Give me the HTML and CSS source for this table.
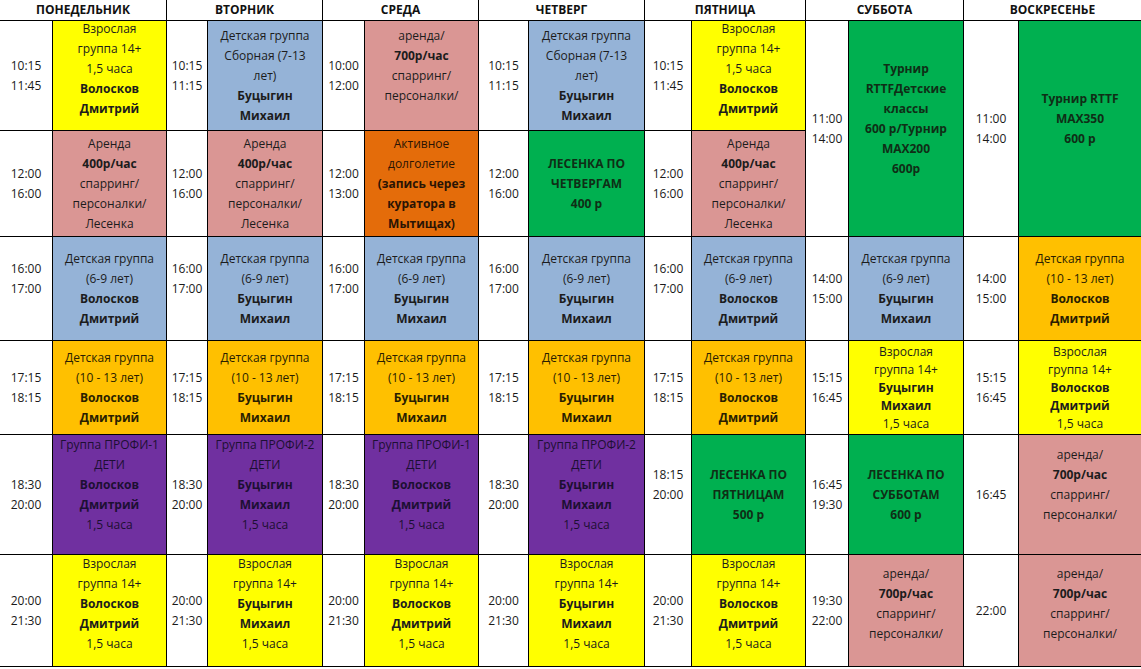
FILE: index.html
```html
<!DOCTYPE html>
<html lang="ru">
<head>
<meta charset="utf-8">
<title>Расписание</title>
<link rel="stylesheet" href="styles.css">
</head>
<body>
<div class="grid">
  <div class="h">ПОНЕДЕЛЬНИК</div>
  <div class="h">ВТОРНИК</div>
  <div class="h">СРЕДА</div>
  <div class="h">ЧЕТВЕРГ</div>
  <div class="h">ПЯТНИЦА</div>
  <div class="h">СУББОТА</div>
  <div class="h">ВОСКРЕСЕНЬЕ</div>

  <!-- row 1 -->
  <div class="t"><p>10:15<br>11:45</p></div>
  <div class="c y up3"><p>Взрослая<br>группа 14+<br>1,5 часа<br><b>Волосков<br>Дмитрий</b></p></div>
  <div class="t"><p>10:15<br>11:15</p></div>
  <div class="c b"><p>Детская группа<br>Сборная (7-13<br>лет)<br><b>Буцыгин<br>Михаил</b></p></div>
  <div class="t"><p>10:00<br>12:00</p></div>
  <div class="c p up"><p>аренда/<br><b>700р/час</b><br>спарринг/<br>персоналки/</p></div>
  <div class="t"><p>10:15<br>11:15</p></div>
  <div class="c b"><p>Детская группа<br>Сборная (7-13<br>лет)<br><b>Буцыгин<br>Михаил</b></p></div>
  <div class="t"><p>10:15<br>11:45</p></div>
  <div class="c y up3"><p>Взрослая<br>группа 14+<br>1,5 часа<br><b>Волосков<br>Дмитрий</b></p></div>
  <div class="t tall"><p>11:00<br>14:00</p></div>
  <div class="c g tall up"><p><b>Турнир<br>RTTFДетские<br>классы<br>600 р/Турнир<br>MAX200<br>600р</b></p></div>
  <div class="t tall"><p>11:00<br>14:00</p></div>
  <div class="c g tall up"><p><b>Турнир RTTF<br>MAX350<br>600 р</b></p></div>

  <!-- row 2 -->
  <div class="t"><p>12:00<br>16:00</p></div>
  <div class="c p"><p>Аренда<br><b>400р/час</b><br>спарринг/<br>персоналки/<br>Лесенка</p></div>
  <div class="t"><p>12:00<br>16:00</p></div>
  <div class="c p"><p>Аренда<br><b>400р/час</b><br>спарринг/<br>персоналки/<br>Лесенка</p></div>
  <div class="t"><p>12:00<br>13:00</p></div>
  <div class="c o"><p>Активное<br>долголетие<br><b>(запись через<br>куратора в<br>Мытищах)</b></p></div>
  <div class="t"><p>12:00<br>16:00</p></div>
  <div class="c g"><p><b>ЛЕСЕНКА ПО<br>ЧЕТВЕРГАМ<br>400 р</b></p></div>
  <div class="t"><p>12:00<br>16:00</p></div>
  <div class="c p"><p>Аренда<br><b>400р/час</b><br>спарринг/<br>персоналки/<br>Лесенка</p></div>

  <!-- row 3 -->
  <div class="t up"><p>16:00<br>17:00</p></div>
  <div class="c b"><p>Детская группа<br>(6-9 лет)<br><b>Волосков<br>Дмитрий</b></p></div>
  <div class="t up"><p>16:00<br>17:00</p></div>
  <div class="c b"><p>Детская группа<br>(6-9 лет)<br><b>Буцыгин<br>Михаил</b></p></div>
  <div class="t up"><p>16:00<br>17:00</p></div>
  <div class="c b"><p>Детская группа<br>(6-9 лет)<br><b>Буцыгин<br>Михаил</b></p></div>
  <div class="t up"><p>16:00<br>17:00</p></div>
  <div class="c b"><p>Детская группа<br>(6-9 лет)<br><b>Буцыгин<br>Михаил</b></p></div>
  <div class="t up"><p>16:00<br>17:00</p></div>
  <div class="c b"><p>Детская группа<br>(6-9 лет)<br><b>Волосков<br>Дмитрий</b></p></div>
  <div class="t"><p>14:00<br>15:00</p></div>
  <div class="c b"><p>Детская группа<br>(6-9 лет)<br><b>Буцыгин<br>Михаил</b></p></div>
  <div class="t"><p>14:00<br>15:00</p></div>
  <div class="c a"><p>Детская группа<br>(10 - 13 лет)<br><b>Волосков<br>Дмитрий</b></p></div>

  <!-- row 4 -->
  <div class="t"><p>17:15<br>18:15</p></div>
  <div class="c a"><p>Детская группа<br>(10 - 13 лет)<br><b>Волосков<br>Дмитрий</b></p></div>
  <div class="t"><p>17:15<br>18:15</p></div>
  <div class="c a"><p>Детская группа<br>(10 - 13 лет)<br><b>Буцыгин<br>Михаил</b></p></div>
  <div class="t"><p>17:15<br>18:15</p></div>
  <div class="c a"><p>Детская группа<br>(10 - 13 лет)<br><b>Буцыгин<br>Михаил</b></p></div>
  <div class="t"><p>17:15<br>18:15</p></div>
  <div class="c a"><p>Детская группа<br>(10 - 13 лет)<br><b>Буцыгин<br>Михаил</b></p></div>
  <div class="t"><p>17:15<br>18:15</p></div>
  <div class="c a"><p>Детская группа<br>(10 - 13 лет)<br><b>Волосков<br>Дмитрий</b></p></div>
  <div class="t"><p>15:15<br>16:45</p></div>
  <div class="c y tight"><p>Взрослая<br>группа 14+<br><b>Буцыгин<br>Михаил</b><br>1,5 часа</p></div>
  <div class="t"><p>15:15<br>16:45</p></div>
  <div class="c y tight"><p>Взрослая<br>группа 14+<br><b>Волосков<br>Дмитрий</b><br>1,5 часа</p></div>

  <!-- row 5 -->
  <div class="t"><p>18:30<br>20:00</p></div>
  <div class="c v up"><p>Группа ПРОФИ-1<br>ДЕТИ<br><b>Волосков<br>Дмитрий</b><br>1,5 часа</p></div>
  <div class="t"><p>18:30<br>20:00</p></div>
  <div class="c v up"><p>Группа ПРОФИ-2<br>ДЕТИ<br><b>Буцыгин<br>Михаил</b><br>1,5 часа</p></div>
  <div class="t"><p>18:30<br>20:00</p></div>
  <div class="c v up"><p>Группа ПРОФИ-1<br>ДЕТИ<br><b>Волосков<br>Дмитрий</b><br>1,5 часа</p></div>
  <div class="t"><p>18:30<br>20:00</p></div>
  <div class="c v up"><p>Группа ПРОФИ-2<br>ДЕТИ<br><b>Буцыгин<br>Михаил</b><br>1,5 часа</p></div>
  <div class="t up"><p>18:15<br>20:00</p></div>
  <div class="c g"><p><b>ЛЕСЕНКА ПО<br>ПЯТНИЦАМ<br>500 р</b></p></div>
  <div class="t"><p>16:45<br>19:30</p></div>
  <div class="c g"><p><b>ЛЕСЕНКА ПО<br>СУББОТАМ<br>600 р</b></p></div>
  <div class="t"><p>16:45</p></div>
  <div class="c p up"><p>аренда/<br><b>700р/час</b><br>спарринг/<br>персоналки/</p></div>

  <!-- row 6 -->
  <div class="t"><p>20:00<br>21:30</p></div>
  <div class="c y up2"><p>Взрослая<br>группа 14+<br><b>Волосков<br>Дмитрий</b><br>1,5 часа</p></div>
  <div class="t"><p>20:00<br>21:30</p></div>
  <div class="c y up2"><p>Взрослая<br>группа 14+<br><b>Буцыгин<br>Михаил</b><br>1,5 часа</p></div>
  <div class="t"><p>20:00<br>21:30</p></div>
  <div class="c y up2"><p>Взрослая<br>группа 14+<br><b>Волосков<br>Дмитрий</b><br>1,5 часа</p></div>
  <div class="t"><p>20:00<br>21:30</p></div>
  <div class="c y up2"><p>Взрослая<br>группа 14+<br><b>Буцыгин<br>Михаил</b><br>1,5 часа</p></div>
  <div class="t"><p>20:00<br>21:30</p></div>
  <div class="c y up2"><p>Взрослая<br>группа 14+<br><b>Волосков<br>Дмитрий</b><br>1,5 часа</p></div>
  <div class="t"><p>19:30<br>22:00</p></div>
  <div class="c p up2"><p>аренда/<br><b>700р/час</b><br>спарринг/<br>персоналки/</p></div>
  <div class="t"><p>22:00</p></div>
  <div class="c p up2"><p>аренда/<br><b>700р/час</b><br>спарринг/<br>персоналки/</p></div>
</div>
</body>
</html>
```

FILE: styles.css
```css
html, body {
  margin: 0;
  padding: 0;
  background: #ffffff;
}

body {
  font-family: "Open Sans", "Liberation Sans", sans-serif;
  color: #1c1c1c;
}

.grid {
  display: grid;
  width: 1141px;
  grid-template-columns: 52px 113px 40px 114px 41px 113px 49px 115px 46px 113px 42px 114px 54px 122px;
  grid-template-rows: 20px 109px 105px 103px 93px 119px 111px;
  gap: 1px;
  background: #000000;
  padding-bottom: 1px;
}

.h {
  grid-column: span 2;
  background: #ffffff;
  display: flex;
  align-items: center;
  justify-content: center;
  font-weight: 700;
  font-size: 12px;
  line-height: 20px;
  color: #111111;
}

.t,
.c {
  display: flex;
  align-items: center;
  justify-content: center;
  text-align: center;
  font-size: 12px;
  line-height: 20px;
  overflow: hidden;
  box-sizing: border-box;
}

.t p,
.c p {
  margin: 0;
  white-space: nowrap;
}

.t {
  background: #ffffff;
  color: #1a1a1a;
}

.c b {
  font-weight: 700;
}

.tall {
  grid-row: span 2;
}

.up {
  padding-bottom: 20px;
}

.up2 {
  padding-bottom: 14px;
}

.up3 {
  padding-bottom: 14px;
}

.tight {
  line-height: 18px;
}

.y { background: #ffff00; }
.b { background: #95b3d7; }
.p { background: #da9694; }
.o { background: #e46c0a; color: #2a1404; }
.g { background: #00b050; color: #0f2e16; }
.v { background: #7030a0; color: #1d0f33; }
.a { background: #ffc000; color: #2a1e00; }
```
